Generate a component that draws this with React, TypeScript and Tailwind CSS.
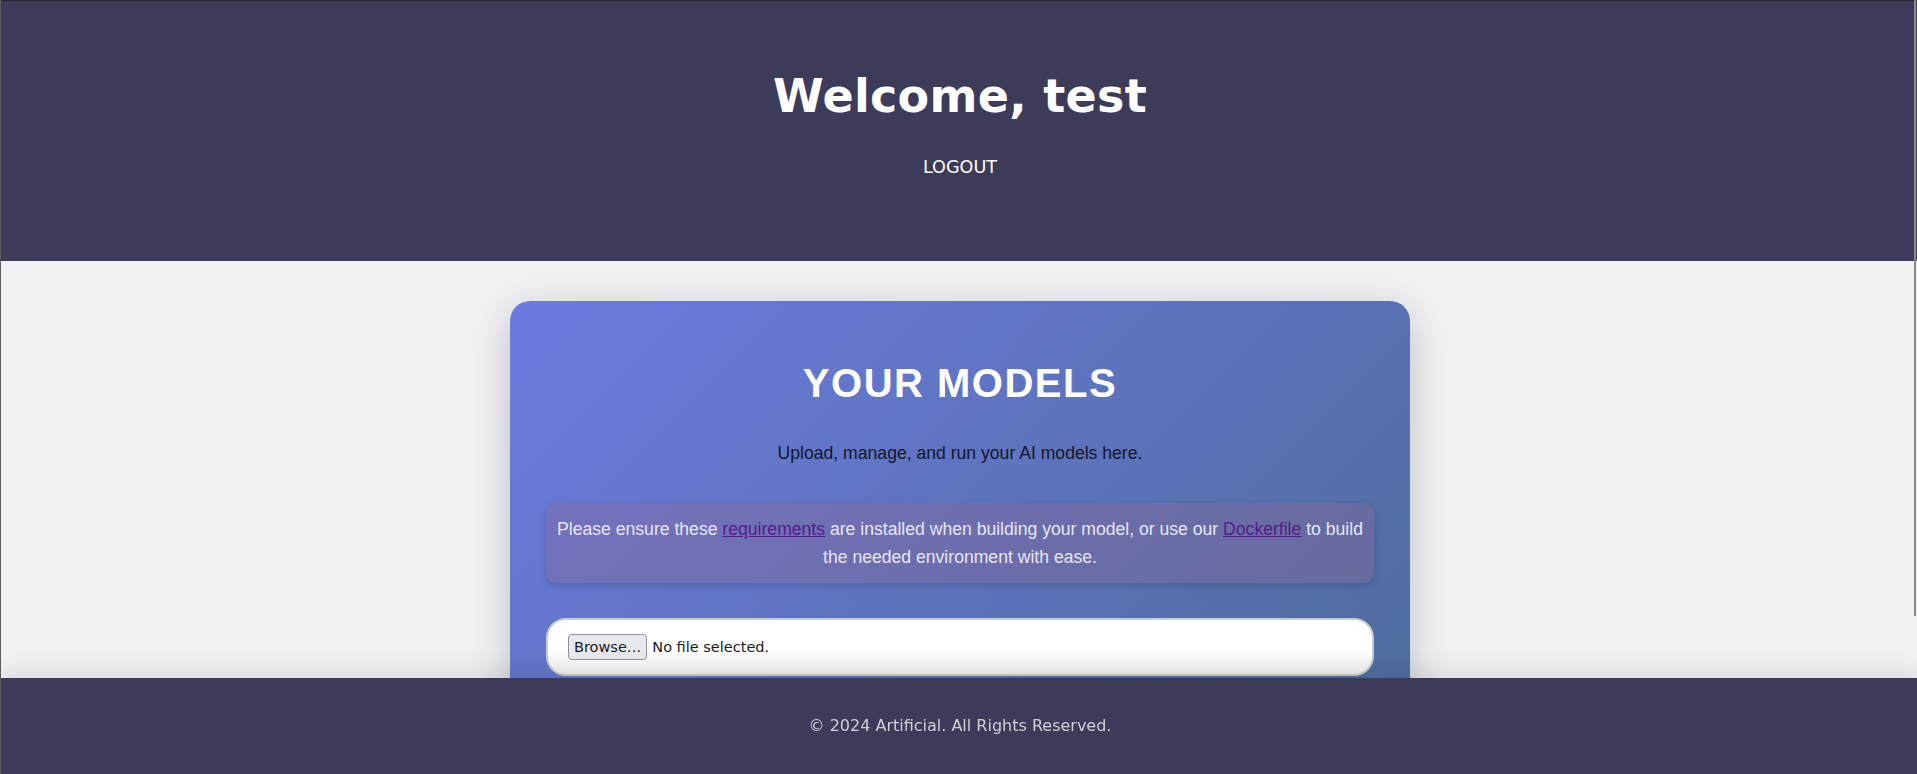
import React from "react";

export default function App() {
  return (
    <div className="min-h-[972px] bg-[#f0f0f5] border-l border-[#5c5c5c] font-['DejaVu_Sans',sans-serif]">
      <header className="h-[261px] bg-[#3c3b59] border-t border-[#25252f] flex flex-col items-center text-white pl-[2px]">
        <h1 className="mt-[68px] text-[46px] leading-[54px] font-bold tracking-[0.3px] font-['DejaVu_Sans',sans-serif]">
          Welcome, test
        </h1>
        <a className="mt-[34px] text-[17.6px] leading-[20px] cursor-pointer">LOGOUT</a>
      </header>

      <main className="flex justify-center pt-[40px] pb-[50px] pl-[2px]">
        <section className="w-[900px] h-[620px] rounded-[20px] bg-[linear-gradient(135deg,#6b7be0_0%,#4a6a92_100%)] shadow-[0_10px_40px_rgba(0,0,0,0.2)] px-[36px] pt-[35px] font-['Liberation_Sans',Arial,sans-serif] text-center">
          <h2 className="mt-[24px] text-[40px] leading-[46px] font-bold tracking-[1.5px] text-white">
            YOUR MODELS
          </h2>
          <p className="mt-[37px] text-[17.6px] leading-[20px] text-[#15152a]">
            Upload, manage, and run your AI models here.
          </p>
          <div className="mt-[40px] rounded-[10px] bg-[rgba(150,100,140,0.3)] shadow-[0_3px_8px_rgba(0,0,0,0.15)] px-[10px] py-[12px] text-[17.6px] leading-[28.2px] text-[#e6e6f2]">
            Please ensure these{" "}
            <a className="text-[#551a8b] underline cursor-pointer">requirements</a> are installed when
            building your model, or use our{" "}
            <a className="text-[#551a8b] underline cursor-pointer">Dockerfile</a> to build the needed
            environment with ease.
          </div>
          <div className="mt-[35px] h-[58px] rounded-[20px] border-2 border-[#cccccc] bg-[linear-gradient(to_bottom,#ffffff_0%,#ffffff_55%,#efeff0_100%)] flex items-center px-[20px] font-['DejaVu_Sans',sans-serif] text-[14.5px] text-[#1c1c1c]">
            <span className="h-[26px] px-[5px] flex items-center rounded-[4px] border border-[#8f8f9d] bg-[#e9e9ed]">
              Browse…
            </span>
            <span className="ml-[5px]">No file selected.</span>
          </div>
        </section>
      </main>

      <footer className="fixed bottom-0 left-0 right-0 h-[96px] bg-[#3c3b59] border-l border-[#5c5c5c] shadow-[0_-6px_24px_rgba(0,0,0,0.1)] flex items-center justify-center text-[16px] text-[#cfcfd8] pl-[2px]">
        © 2024 Artificial. All Rights Reserved.
      </footer>

      <div className="fixed top-0 right-[1px] w-[2px] h-[616px] bg-[#8a8a8a]" />
    </div>
  );
}
